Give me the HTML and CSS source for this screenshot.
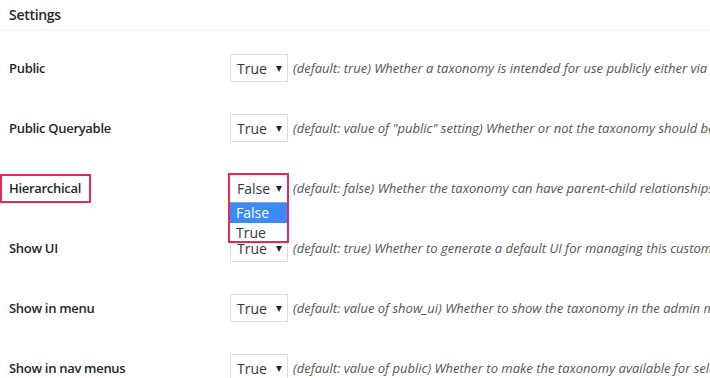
FILE: index.html
```html
<!DOCTYPE html>
<html>
<head>
<meta charset="utf-8">
<link rel="stylesheet" href="styles.css">
</head>
<body>
<div class="panel">
  <div class="panel-head">Settings</div>
  <div class="rows">
    <div class="row">
      <div class="label">Public</div>
      <div class="field">
        <div class="select">True<span class="arrow"></span></div>
        <span class="desc">(default: true) Whether a taxonomy is intended for use publicly either via the admin interface or by front-end users.</span>
      </div>
    </div>
    <div class="row">
      <div class="label">Public Queryable</div>
      <div class="field">
        <div class="select">True<span class="arrow"></span></div>
        <span class="desc">(default: value of "public" setting) Whether or not the taxonomy should be publicly queryable.</span>
      </div>
    </div>
    <div class="row">
      <div class="label"><span class="mark">Hierarchical</span></div>
      <div class="field">
        <div class="open-wrap">
          <div class="select select-open">False<span class="arrow"></span></div>
          <div class="menu">
            <div class="opt opt-active">False</div>
            <div class="opt">True</div>
          </div>
        </div>
        <span class="desc">(default: false) Whether the taxonomy can have parent-child relationships.</span>
      </div>
    </div>
    <div class="row">
      <div class="label">Show UI</div>
      <div class="field">
        <div class="select">True<span class="arrow"></span></div>
        <span class="desc">(default: true) Whether to generate a default UI for managing this custom taxonomy.</span>
      </div>
    </div>
    <div class="row">
      <div class="label">Show in menu</div>
      <div class="field">
        <div class="select">True<span class="arrow"></span></div>
        <span class="desc">(default: value of show_ui) Whether to show the taxonomy in the admin menu.</span>
      </div>
    </div>
    <div class="row">
      <div class="label">Show in nav menus</div>
      <div class="field">
        <div class="select">True<span class="arrow"></span></div>
        <span class="desc">(default: value of public) Whether to make the taxonomy available for selection in navigation menus.</span>
      </div>
    </div>
  </div>
</div>
</body>
</html>
```

FILE: styles.css
```css
html, body {
  margin: 0;
  padding: 0;
  background: #ffffff;
  overflow: hidden;
}
body {
  font-family: "Open Sans", "Noto Sans", sans-serif;
  color: #23282d;
  width: 710px;
  height: 378px;
}
.panel {
  width: 710px;
}
.panel-head {
  height: 31px;
  box-sizing: border-box;
  padding: 5px 9px 0;
  font-size: 14px;
  font-weight: 600;
  letter-spacing: -0.3px;
  line-height: 20px;
  border-bottom: 1px solid #eeeeee;
}
.rows {
  padding-top: 7px;
}
.row {
  display: flex;
  align-items: center;
  height: 60px;
}
.label {
  width: 230px;
  flex: none;
  box-sizing: border-box;
  padding-left: 9px;
  font-size: 13px;
  font-weight: 600;
  letter-spacing: -0.3px;
}
.mark {
  display: inline-block;
  margin-left: -9px;
  padding: 3px 8px 4px 7px;
  border: 2px solid #e22a55;
  line-height: 18px;
}
.field {
  display: flex;
  align-items: center;
  gap: 5px;
  flex: 1;
  min-width: 0;
  white-space: nowrap;
}
.select {
  position: relative;
  width: 58px;
  height: 28px;
  flex: none;
  box-sizing: border-box;
  border: 1px solid #dddddd;
  background: #ffffff;
  padding-left: 6px;
  font-size: 14px;
  line-height: 27px;
  color: #32373c;
}
.arrow {
  position: absolute;
  right: 5px;
  top: 11px;
  width: 0;
  height: 0;
  border-left: 3.5px solid transparent;
  border-right: 3.5px solid transparent;
  border-top: 6px solid #23282d;
}
.desc {
  font-size: 13px;
  font-style: italic;
  color: #555555;
  overflow: hidden;
}
.open-wrap {
  position: relative;
  width: 58px;
  height: 28px;
  flex: none;
}
.select-open {
  border-color: #ffffff;
}
.open-wrap::before {
  content: "";
  position: absolute;
  left: -2px;
  top: -1px;
  width: 57px;
  height: 66px;
  border: 2px solid #e22a55;
  z-index: 2;
  pointer-events: none;
}
.menu {
  position: absolute;
  left: 0;
  top: 28px;
  width: 57px;
  background: #ffffff;
  border-top: 1px solid #8aa0c0;
  z-index: 1;
}
.opt {
  height: 19px;
  line-height: 19px;
  padding-left: 6px;
  font-size: 14px;
  color: #32373c;
}
.opt-active {
  height: 20px;
  line-height: 20px;
  background: #3d8af7;
  color: #ffffff;
}
```
